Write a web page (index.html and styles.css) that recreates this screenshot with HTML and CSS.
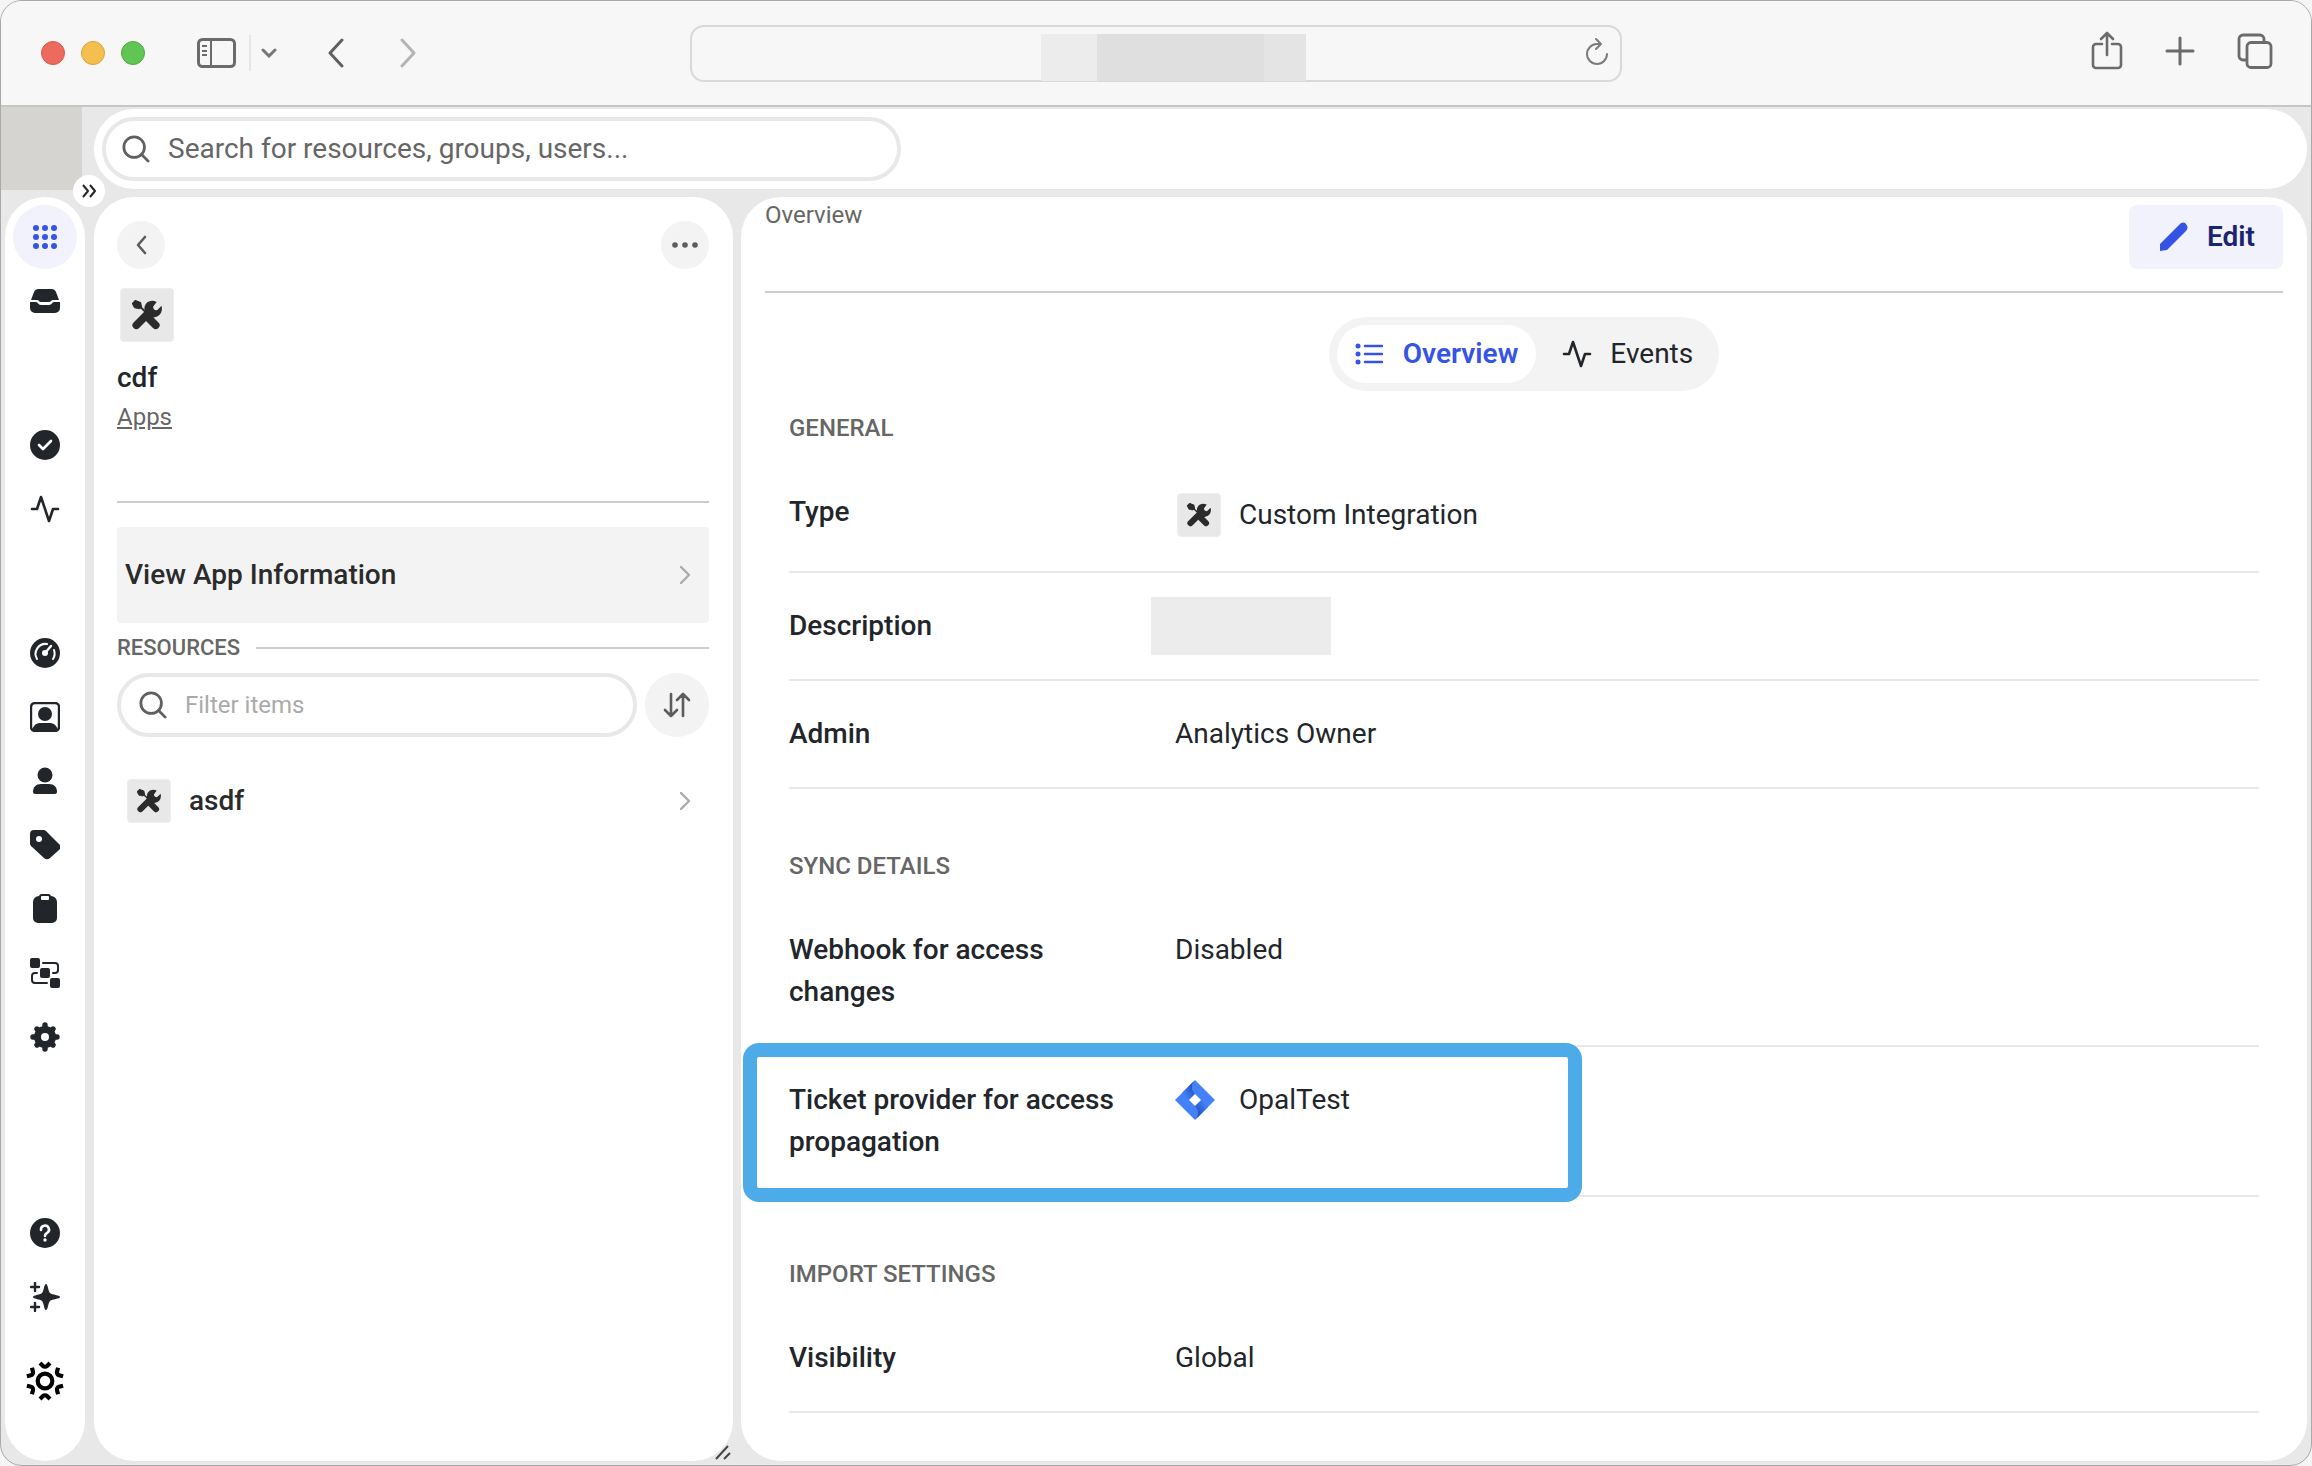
FILE: index.html
```html
<!DOCTYPE html>
<html lang="en">
  <head>
    <meta charset="UTF-8" />
    <meta name="viewport" content="width=device-width, initial-scale=1.0" />
    <title>cdf - Overview</title>
    <link rel="stylesheet" href="styles.css">
  </head>
  <body>
    <!-- shared icons -->
    <svg class="defs" aria-hidden="true">
      <symbol id="i-search" viewBox="0 0 30 30">
        <circle cx="13" cy="13" r="11" fill="none" stroke="currentColor" stroke-width="3" />
        <path d="M21 21l7 7" stroke="currentColor" stroke-width="3" stroke-linecap="round" />
      </symbol>
      <symbol id="i-tools" viewBox="0 0 32 31">
        <path d="M1 4 4 1l5 2 1 5 4 4" fill="none" stroke="currentColor" stroke-width="2" />
        <path d="M1 4 4 1l5 2 1 5-2 1-5-1z" fill="currentColor" stroke="currentColor" stroke-linejoin="round" />
        <path d="M16 17l9 9M5 26l12-12" stroke="currentColor" stroke-width="8" stroke-linecap="round" />
        <path d="M26 2c-8-4-15 3-12 11l5 5c8 1 14-4 12-12l-4 4c-3 2-6-2-4-4z" fill="currentColor" />
      </symbol>
      <symbol id="i-right" viewBox="0 0 12 20">
        <path d="M2 2l8 8-8 8" fill="none" stroke="currentColor" stroke-width="2.400" stroke-linecap="round" stroke-linejoin="round" />
      </symbol>
      <symbol id="i-pulse" viewBox="0 0 30 30">
        <path d="M2 15h5l4-12 8 24 4-12h5" fill="none" stroke="currentColor" stroke-width="2.6" stroke-linecap="round" stroke-linejoin="round" />
      </symbol>
    </svg>

    <div class="window">
      <header class="toolbar">
        <div class="toolbar_left">
          <span class="light -red"></span>
          <span class="light -yellow"></span>
          <span class="light -green"></span>
          <button class="bar_btn sidebar_btn" aria-label="Sidebar">
            <svg width="40" height="30" viewBox="0 0 40 30" fill="none" stroke="#6b6b6b" stroke-width="3">
              <rect x="1.5" y="1.5" width="36" height="27" rx="4" />
              <path d="M14 2v26M5 8h5M5 13h5M5 17h5" stroke-width="2" />
            </svg>
          </button>
          <span class="divider"></span>
          <button class="bar_btn more_btn" aria-label="Tab groups">
            <svg width="16" height="10" viewBox="0 0 16 10"><path d="M2 2l6 6 6-6" fill="none" stroke="#77777b" stroke-width="3" stroke-linecap="round" /></svg>
          </button>
          <button class="bar_btn back_btn" aria-label="Back">
            <svg width="18" height="30" viewBox="0 0 18 30"><path d="M15 2L3 15l12 13" fill="none" stroke="#606060" stroke-width="3" stroke-linecap="round" stroke-linejoin="round" /></svg>
          </button>
          <button class="bar_btn" aria-label="Forward">
            <svg width="18" height="30" viewBox="0 0 18 30"><path d="M3 2l12 13L3 28" fill="none" stroke="#b4b4b4" stroke-width="3" stroke-linecap="round" stroke-linejoin="round" /></svg>
          </button>
        </div>
        <div class="address">
          <div class="address_mask"><i></i><i></i><i></i></div>
          <button class="bar_btn reload" aria-label="Reload">
            <svg width="24" height="28" viewBox="0 0 24 28" fill="none" stroke="#7c7c7c" stroke-width="2" stroke-linecap="round">
              <path d="M22 16a10 10 0 1 1-10-10h4M11 1l5 5-5 5" />
            </svg>
          </button>
        </div>
        <div class="toolbar_right">
          <button class="bar_btn" aria-label="Share">
            <svg width="32" height="40" viewBox="0 0 32 40" fill="none" stroke="#6b6b6b" stroke-width="2.6" stroke-linecap="round" stroke-linejoin="round">
              <path d="M11 13H5a3 3 0 0 0-3 3v18a3 3 0 0 0 3 3h22a3 3 0 0 0 3-3V16a3 3 0 0 0-3-3h-6M16 24V2M10 8l6-6 6 6" />
            </svg>
          </button>
          <button class="bar_btn" aria-label="New tab">
            <svg width="30" height="30" viewBox="0 0 30 30"><path d="M15 2v26M2 15h26" stroke="#6b6b6b" stroke-width="3" stroke-linecap="round" /></svg>
          </button>
          <button class="bar_btn" aria-label="Tab overview">
            <svg width="36" height="36" viewBox="0 0 36 36" fill="none" stroke="#6b6b6b" stroke-width="2.8">
              <rect x="10" y="9.500" width="24" height="25" rx="4" />
              <path d="M9 27H6a4 4 0 0 1-4-4V6a4 4 0 0 1 4-4h17a4 4 0 0 1 4 4v3" />
            </svg>
          </button>
        </div>
      </header>

      <div class="app">
        <div class="rail">
          <div class="logo_block"></div>
          <button class="expand" aria-label="Expand menu">
            <svg width="16" height="14" viewBox="0 0 16 14"><path d="M2 1l5 6-5 6M9 1l5 6-5 6" fill="none" stroke="#22262a" stroke-width="2" stroke-linejoin="round" /></svg>
          </button>
          <nav class="nav">
            <a href="#" class="nav_link -on" aria-label="Apps">
              <svg width="26" height="26" viewBox="0 0 26 26" fill="currentColor">
                <circle cx="4" cy="4" r="3" /><circle cx="13" cy="4" r="3" /><circle cx="22" cy="4" r="3" />
                <circle cx="4" cy="13" r="3" /><circle cx="13" cy="13" r="3" /><circle cx="22" cy="13" r="3" />
                <circle cx="4" cy="22" r="3" /><circle cx="13" cy="22" r="3" /><circle cx="22" cy="22" r="3" />
              </svg>
            </a>
            <a href="#" class="nav_link" aria-label="Inbox">
              <svg class="icon" viewBox="0 0 30 30" fill="currentColor">
                <path d="M9 3h12a5 5 0 0 1 5 3l3 8h-6c-2 0-2 2-4 2h-8c-2 0-2-2-4-2H1l3-8a5 5 0 0 1 5-3z" />
                <path d="M0 16h6c2 0 2 3 5 3h8c3 0 3-3 5-3h6v6a5 5 0 0 1-5 5H5a5 5 0 0 1-5-5z" />
              </svg>
            </a>
            <a href="#" class="nav_link -gap" aria-label="Approvals">
              <svg class="icon" viewBox="0 0 30 30">
                <circle cx="15" cy="15" r="15" fill="currentColor" />
                <path d="M9 15l4 4 8-8" fill="none" stroke="#fff" stroke-width="2.600" stroke-linecap="round" stroke-linejoin="round" />
              </svg>
            </a>
            <a href="#" class="nav_link" aria-label="Events">
              <svg class="icon"><use href="#i-pulse" /></svg>
            </a>
            <a href="#" class="nav_link -gap" aria-label="Insights">
              <svg class="icon" viewBox="0 0 30 30">
                <circle cx="15" cy="15" r="15" fill="currentColor" />
                <path d="M7 21a10 10 0 0 1 10-15M24 12a10 10 0 0 1-1 9" fill="none" stroke="#fff" stroke-width="2" stroke-linecap="round" />
                <path d="M15 15l6-7" stroke="#fff" stroke-width="2.400" stroke-linecap="round" />
                <circle cx="15" cy="15" r="3" fill="#fff" />
              </svg>
            </a>
            <a href="#" class="nav_link" aria-label="Groups">
              <svg class="icon" viewBox="0 0 30 30" fill="currentColor">
                <rect x="1" y="1" width="28" height="28" rx="4" fill="none" stroke="currentColor" stroke-width="2.400" />
                <circle cx="15" cy="12" r="7" />
                <path d="M2 28c2-6 5-7 9-7h8c4 0 7 1 9 7z" />
              </svg>
            </a>
            <a href="#" class="nav_link" aria-label="Users">
              <svg class="icon" viewBox="0 0 30 30" fill="currentColor">
                <circle cx="15" cy="9" r="7.500" />
                <path d="M3 26c0-5 3-8 8-8h8c5 0 8 3 8 8 0 1-1 2-2 2H5c-1 0-2-1-2-2z" />
              </svg>
            </a>
            <a href="#" class="nav_link" aria-label="Tags">
              <svg class="icon" viewBox="0 0 30 30">
                <path d="M0 4a4 4 0 0 1 4-4h9a4 4 0 0 1 3 1l13 13a4 4 0 0 1 0 6l-9 8a4 4 0 0 1-6 0L1 16a4 4 0 0 1-1-3z" fill="currentColor" />
                <circle cx="9" cy="9" r="3" fill="#fff" />
              </svg>
            </a>
            <a href="#" class="nav_link" aria-label="Access reviews">
              <svg class="icon" viewBox="0 0 30 30">
                <path d="M11 0h8a3 3 0 0 1 2 2 6 6 0 0 1 6 6v16a5 5 0 0 1-5 5H8a5 5 0 0 1-5-5V8a6 6 0 0 1 6-6 3 3 0 0 1 2-2z" fill="currentColor" />
                <rect x="11" y="2" width="8" height="4" rx="1" fill="#fff" />
              </svg>
            </a>
            <a href="#" class="nav_link" aria-label="Workflows">
              <svg class="icon" viewBox="0 0 30 30" fill="currentColor">
                <rect width="10" height="10" rx="2" /><rect x="10" y="10" width="10" height="10" rx="2" /><rect x="20" y="20" width="10" height="10" rx="2" />
                <path d="M13 5h12a3 3 0 0 1 3 3v4a3 3 0 0 1-3 3h-2M7 15H5a3 3 0 0 0-3 3v4a3 3 0 0 0 3 3h12" fill="none" stroke="currentColor" stroke-width="2" stroke-linecap="round" />
              </svg>
            </a>
            <a href="#" class="nav_link" aria-label="Settings">
              <svg class="icon" viewBox="0 0 30 30">
                <circle cx="15" cy="15" r="11" fill="currentColor" />
                <path d="M15 3v24M3 15h24M7 7l16 16M23 7L7 23" stroke="currentColor" stroke-width="5.400" stroke-linecap="round" />
                <circle cx="15" cy="15" r="4" fill="#fff" />
              </svg>
            </a>
            <a href="#" class="nav_link -bottom" aria-label="Help">
              <svg class="icon" viewBox="0 0 30 30">
                <circle cx="15" cy="15" r="15" fill="currentColor" />
                <path d="M11 12a4 4 0 1 1 6 3c-1 1-2 1-2 3" fill="none" stroke="#fff" stroke-width="2.600" stroke-linecap="round" />
                <circle cx="15" cy="22" r="1.700" fill="#fff" />
              </svg>
            </a>
            <a href="#" class="nav_link" aria-label="What's new">
              <svg class="icon" viewBox="0 0 30 30">
                <path d="M16 2c2 0 2 7 4 9s10 2 10 4-8 2-10 4-2 9-4 9-2-7-4-9-9-2-9-4 7-2 9-4 2-9 4-9z" fill="currentColor" />
                <path d="M5 1v8M1 5h8M5 21v8M1 25h8" stroke="currentColor" stroke-width="2.400" stroke-linecap="round" />
              </svg>
            </a>
            <a href="#" class="nav_link -brand" aria-label="Home">
              <svg width="40" height="40" viewBox="0 0 40 40" fill="none" stroke="#000" stroke-width="4.200">
                <circle cx="20" cy="20" r="7.300" />
                <path id="petal" d="M15 2l3 3c1 1 3 1 4 0l3-3" />
                <use href="#petal" transform="rotate(60 20 20)" /><use href="#petal" transform="rotate(120 20 20)" />
                <use href="#petal" transform="rotate(180 20 20)" /><use href="#petal" transform="rotate(240 20 20)" />
                <use href="#petal" transform="rotate(300 20 20)" />
              </svg>
            </a>
          </nav>
        </div>

        <div class="content">
          <div class="topbar">
            <label class="search">
              <svg class="search_icon"><use href="#i-search" /></svg>
              <input type="text" placeholder="Search for resources, groups, users..." aria-label="Search for resources, groups, users" />
            </label>
          </div>

          <div class="columns">
            <aside class="panel side_panel">
              <div class="side_head">
                <button class="round_btn" aria-label="Back">
                  <svg width="12" height="20" viewBox="0 0 12 20"><path d="M10 2L3 10l7 8" fill="none" stroke="#5c5c5c" stroke-width="2.600" stroke-linecap="round" stroke-linejoin="round" /></svg>
                </button>
                <button class="round_btn" aria-label="More">
                  <svg width="26" height="6" viewBox="0 0 26 6" fill="#5c5c5c"><circle cx="3" cy="3" r="2.800" /><circle cx="13" cy="3" r="2.800" /><circle cx="23" cy="3" r="2.800" /></svg>
                </button>
              </div>
              <span class="tool_box -large"><svg><use href="#i-tools" /></svg></span>
              <h1 class="app_name">cdf</h1>
              <a href="#" class="app_parent">Apps</a>
              <a href="#" class="info_link">View App Information <svg class="right"><use href="#i-right" /></svg></a>
              <h2 class="resources">Resources</h2>
              <div class="filter_row">
                <label class="search">
                  <svg class="search_icon"><use href="#i-search" /></svg>
                  <input type="text" placeholder="Filter items" aria-label="Filter items" />
                </label>
                <button class="round_btn -big" aria-label="Sort">
                  <svg width="28" height="26" viewBox="0 0 28 26" fill="none" stroke="#5c5c5c" stroke-width="2.600" stroke-linecap="round" stroke-linejoin="round">
                    <path d="M8 2v22M2 18l6 6 6-6M20 24V2M14 8l6-6 6 6" />
                  </svg>
                </button>
              </div>
              <a href="#" class="resource"><span class="tool_box"><svg><use href="#i-tools" /></svg></span>asdf <svg class="right"><use href="#i-right" /></svg></a>
              <svg class="grip" width="16" height="16" viewBox="0 0 16 16"><path d="M1 14L13 1M9 14l6-6" stroke="#444" stroke-width="2" /></svg>
            </aside>

            <main class="panel main_panel">
              <div class="main_head">
                <span>Overview</span>
                <button class="edit">
                  <svg width="30" height="30" viewBox="0 0 30 30"><path d="M1 29v-7L20 3c3-3 5-3 7-1s2 5 0 7L8 28z" fill="#3553e4" /></svg>
                  Edit
                </button>
              </div>

              <div class="tabs">
                <button class="tab -on">
                  <svg width="30" height="22" viewBox="0 0 30 22" fill="currentColor">
                    <circle cx="3" cy="3" r="2.500" /><circle cx="3" cy="11" r="2.500" /><circle cx="3" cy="19" r="2.500" />
                    <path d="M10 3h17M10 11h17M10 19h17" stroke="currentColor" stroke-width="2.400" stroke-linecap="round" />
                  </svg>
                  Overview
                </button>
                <button class="tab">
                  <svg class="icon"><use href="#i-pulse" /></svg>
                  Events
                </button>
              </div>

              <section class="group">
                <h3>General</h3>
                <dl>
                  <div class="row"><dt>Type</dt><dd class="-type"><span class="tool_box"><svg><use href="#i-tools" /></svg></span>Custom Integration</dd></div>
                  <div class="row"><dt>Description</dt><dd><span class="mask"></span></dd></div>
                  <div class="row"><dt>Admin</dt><dd>Analytics Owner</dd></div>
                </dl>
              </section>

              <section class="group">
                <h3>Sync details</h3>
                <dl>
                  <div class="row"><dt>Webhook for access changes</dt><dd>Disabled</dd></div>
                  <div class="row -marked">
                    <dt>Ticket provider for access propagation</dt>
                    <dd>
                      <svg class="jira" viewBox="0 0 40 40">
                        <defs>
                          <linearGradient id="g1" x1="1" y1="0" x2="0" y2="1"><stop offset="0.2" stop-color="#1f50bd" /><stop offset="0.8" stop-color="#4480f7" /></linearGradient>
                          <linearGradient id="g2" x1="0" y1="1" x2="1" y2="0"><stop offset="0.2" stop-color="#1f50bd" /><stop offset="0.8" stop-color="#4480f7" /></linearGradient>
                        </defs>
                        <path d="M20 0l20 20-20 20L0 20z" fill="#4480f7" />
                        <path d="M19 1c-3 4-3 9 1 13l-6 6-7-7z" fill="url(#g1)" />
                        <path d="M21 39c3-4 3-9-1-13l6-6 7 7z" fill="url(#g2)" />
                        <path d="M20 14l6 6-6 6-6-6z" fill="#fff" />
                      </svg>
                      OpalTest
                    </dd>
                  </div>
                </dl>
              </section>

              <section class="group">
                <h3>Import settings</h3>
                <dl>
                  <div class="row"><dt>Visibility</dt><dd>Global</dd></div>
                </dl>
              </section>
            </main>
          </div>
        </div>
      </div>
    </div>
  </body>
</html>
```
FILE: styles.css
```css
* {
  box-sizing: border-box;
}
body {
  margin: 0;
  background: #f5f5f5;
  color: #22262a;
  font: 28px/42px Roboto, "Liberation Sans", sans-serif;
}
button {
  border: 0;
  padding: 0;
  background: none;
  font: inherit;
  color: inherit;
}
a {
  color: inherit;
  text-decoration: none;
}
svg {
  display: block;
  flex-shrink: 0;
}
h1,
h2,
h3,
dl,
dd {
  margin: 0;
}
.defs {
  position: absolute;
  width: 0;
  height: 0;
}
.icon {
  width: 30px;
  height: 30px;
}
.window {
  display: flex;
  flex-direction: column;
  min-height: 100vh;
  border: 1px solid #a9a9a9;
  border-radius: 22px;
  overflow: hidden;
  background: #e8e8e8;
}

/* browser toolbar */
.toolbar {
  display: grid;
  grid-template-columns: 1fr 932px 1fr;
  align-items: center;
  height: 106px;
  border-bottom: 2px solid #c6c6c6;
  background: #f7f7f7;
}
.toolbar_left,
.toolbar_right {
  display: flex;
  align-items: center;
}
.toolbar_left {
  padding-left: 40px;
}
.toolbar_right {
  justify-content: flex-end;
  gap: 42px;
  padding: 0 38px 4px 0;
}
.light {
  width: 24px;
  height: 24px;
  margin-right: 16px;
  border: 1px solid #d9584c;
  border-radius: 50%;
  background: #ec6a5e;
}
.light.-yellow {
  border-color: #dca237;
  background: #f4bf4f;
}
.light.-green {
  border-color: #4cab3e;
  background: #61c554;
}
.sidebar_btn {
  margin-left: 36px;
}
.divider {
  width: 2px;
  height: 36px;
  margin: 0 10px 0 12px;
  background: #e6e6e6;
}
.back_btn {
  margin: 0 54px 0 50px;
}
.address {
  display: flex;
  align-items: flex-start;
  height: 57px;
  border: 2px solid #d9d9d9;
  border-radius: 14px;
}
.address_mask {
  display: grid;
  grid-template-columns: 56px 167px 42px;
  height: 47px;
  margin: 7px auto 0 349px;
}
.address_mask i {
  background: #dfdfdf;
}
.address_mask i:first-child {
  background: #ececec;
}
.address_mask i:last-child {
  background: #e4e4e4;
}
.reload {
  margin: 11px 11px 0 0;
}

/* left rail */
.app {
  display: flex;
  flex: 1;
  gap: 9px;
  padding: 2px 4px 4px 0;
}
.rail {
  display: flex;
  flex-direction: column;
  position: relative;
  flex: 0 0 84px;
}
.logo_block {
  width: 81px;
  height: 83px;
  margin-top: -2px;
  background: #d5d4d0;
}
.expand {
  display: flex;
  align-items: center;
  justify-content: center;
  position: absolute;
  top: 66px;
  right: -20px;
  width: 32px;
  height: 32px;
  border-radius: 50%;
  background: #fff;
}
.nav {
  display: flex;
  flex-direction: column;
  flex: 1;
  align-items: center;
  margin: 7px 0 0 4px;
  padding: 8px 0;
  border-radius: 40px;
  background: #fff;
}
.nav_link {
  display: flex;
  align-items: center;
  justify-content: center;
  width: 64px;
  height: 64px;
  border-radius: 50%;
}
.nav_link.-on {
  background: #f2f2fd;
  color: #3553e4;
}
.nav_link.-gap {
  margin-top: 80px;
}
.nav_link.-bottom {
  margin-top: auto;
}
.nav_link.-brand {
  margin: 20px 0 40px;
}

/* top search */
.content {
  display: flex;
  flex-direction: column;
  flex: 1;
  gap: 8px;
  min-width: 0;
}
.topbar {
  padding: 8px;
  border-radius: 40px;
  background: #fff;
}
.search {
  display: flex;
  align-items: center;
  height: 64px;
  padding: 0 20px;
  border: 4px solid #e8e8e8;
  border-radius: 32px;
  color: #606060;
}
.topbar .search {
  width: 799px;
  padding: 0 16px;
}
.search_icon {
  width: 28px;
  height: 28px;
}
.search input {
  flex: 1;
  min-width: 0;
  margin-left: 18px;
  padding: 0;
  border: 0;
  outline: 0;
  background: none;
  font: inherit;
}
.search input::placeholder {
  color: #666;
  opacity: 1;
}

.columns {
  display: flex;
  flex: 1;
  gap: 8px;
}
.panel {
  position: relative;
  border-radius: 40px;
  background: #fff;
}

/* app panel */
.side_panel {
  flex: 0 0 639px;
  padding: 24px 24px 24px 23px;
}
.side_head {
  display: flex;
  justify-content: space-between;
  margin-bottom: 19px;
}
.round_btn {
  display: flex;
  align-items: center;
  justify-content: center;
  flex-shrink: 0;
  width: 48px;
  height: 48px;
  border-radius: 50%;
  background: #f3f3f3;
}
.round_btn.-big {
  width: 64px;
  height: 64px;
}
.tool_box {
  display: flex;
  align-items: center;
  justify-content: center;
  width: 44px;
  height: 44px;
  border: 1px solid #eee;
  border-radius: 4px;
  background: #e8e8e8;
  color: #2b2b2b;
}
.tool_box svg {
  width: 26px;
  height: 24px;
}
.tool_box.-large {
  width: 54px;
  height: 54px;
  margin-left: 3px;
}
.tool_box.-large svg {
  width: 32px;
  height: 30px;
}
.app_name {
  margin-top: 15px;
  font-size: 28px;
  font-weight: 500;
}
.app_parent {
  display: block;
  width: fit-content;
  color: #666;
  font-size: 24px;
  line-height: 36px;
  text-decoration: underline;
}
.info_link {
  display: flex;
  align-items: center;
  justify-content: space-between;
  position: relative;
  height: 96px;
  margin-top: 92px;
  padding: 0 18px 0 8px;
  border-radius: 4px;
  background: #f3f3f3;
  color: #2b2b2b;
  font-weight: 500;
}
.info_link::before {
  content: "";
  position: absolute;
  right: 0;
  bottom: 120px;
  left: 0;
  height: 2px;
  background: #ccc;
}
.right {
  width: 12px;
  height: 20px;
  color: #aaa;
}
.resources {
  display: flex;
  align-items: center;
  gap: 16px;
  margin: 10px 0;
  color: #666;
  font-size: 22px;
  font-weight: 500;
  line-height: 30px;
  text-transform: uppercase;
}
.resources::after {
  content: "";
  flex: 1;
  height: 2px;
  background: #ccc;
}
.filter_row {
  display: flex;
  gap: 8px;
}
.filter_row .search {
  flex: 1;
  padding: 0 18px;
  font-size: 24px;
}
.filter_row .search input::placeholder {
  color: #aaa;
}
.resource {
  display: flex;
  align-items: center;
  gap: 18px;
  margin-top: 42px;
  padding: 0 18px 0 10px;
  color: #2b2b2b;
  font-weight: 500;
}
.resource .right {
  margin-left: auto;
}
.grip {
  position: absolute;
  right: 2px;
  bottom: 0;
}

/* overview panel */
.main_panel {
  flex: 1;
  padding: 0 24px 48px;
}
.main_head {
  display: flex;
  align-items: flex-start;
  justify-content: space-between;
  height: 96px;
  padding-top: 8px;
  border-bottom: 2px solid #ccc;
  color: #666;
  font-size: 24px;
  line-height: 20px;
}
.edit {
  display: flex;
  align-items: center;
  gap: 18px;
  height: 64px;
  padding: 0 28px 0 30px;
  border-radius: 8px;
  background: #f2f2fd;
  color: #1b2470;
  font-size: 28px;
  font-weight: 600;
}
.tabs {
  display: flex;
  gap: 8px;
  width: fit-content;
  margin: 24px auto 22px;
  padding: 8px;
  border-radius: 37px;
  background: #f3f3f3;
}
.tab {
  display: flex;
  align-items: center;
  gap: 18px;
  height: 58px;
  padding: 0 18px;
  border-radius: 29px;
}
.tab.-on {
  background: #fff;
  color: #3553e4;
  font-weight: 600;
}
.group {
  padding: 0 24px;
}
.group + .group {
  margin-top: 62px;
}
.group h3 {
  margin-bottom: 16px;
  color: #666;
  font-size: 24px;
  font-weight: 500;
  line-height: 30px;
  text-transform: uppercase;
}
.row {
  display: grid;
  grid-template-columns: 336px 1fr;
  column-gap: 50px;
  position: relative;
  padding: 32px 0;
  border-bottom: 2px solid #e8e8e8;
}
.row dt {
  font-weight: 500;
}
.row dd {
  display: flex;
  align-items: center;
  height: 42px;
}
.row dd.-type {
  height: 48px;
}
.row .tool_box {
  margin: 0 18px 0 2px;
}
.mask {
  width: 180px;
  height: 58px;
  margin-left: -24px;
  background: #ececec;
}
.jira {
  width: 40px;
  height: 40px;
  margin-right: 24px;
}
/* callout drawn over the row and its borders */
.row.-marked::after {
  content: "";
  position: absolute;
  top: -4px;
  bottom: -7px;
  left: -46px;
  width: 811px;
  border: 14px solid #4eabe9;
  border-radius: 16px;
}
```
